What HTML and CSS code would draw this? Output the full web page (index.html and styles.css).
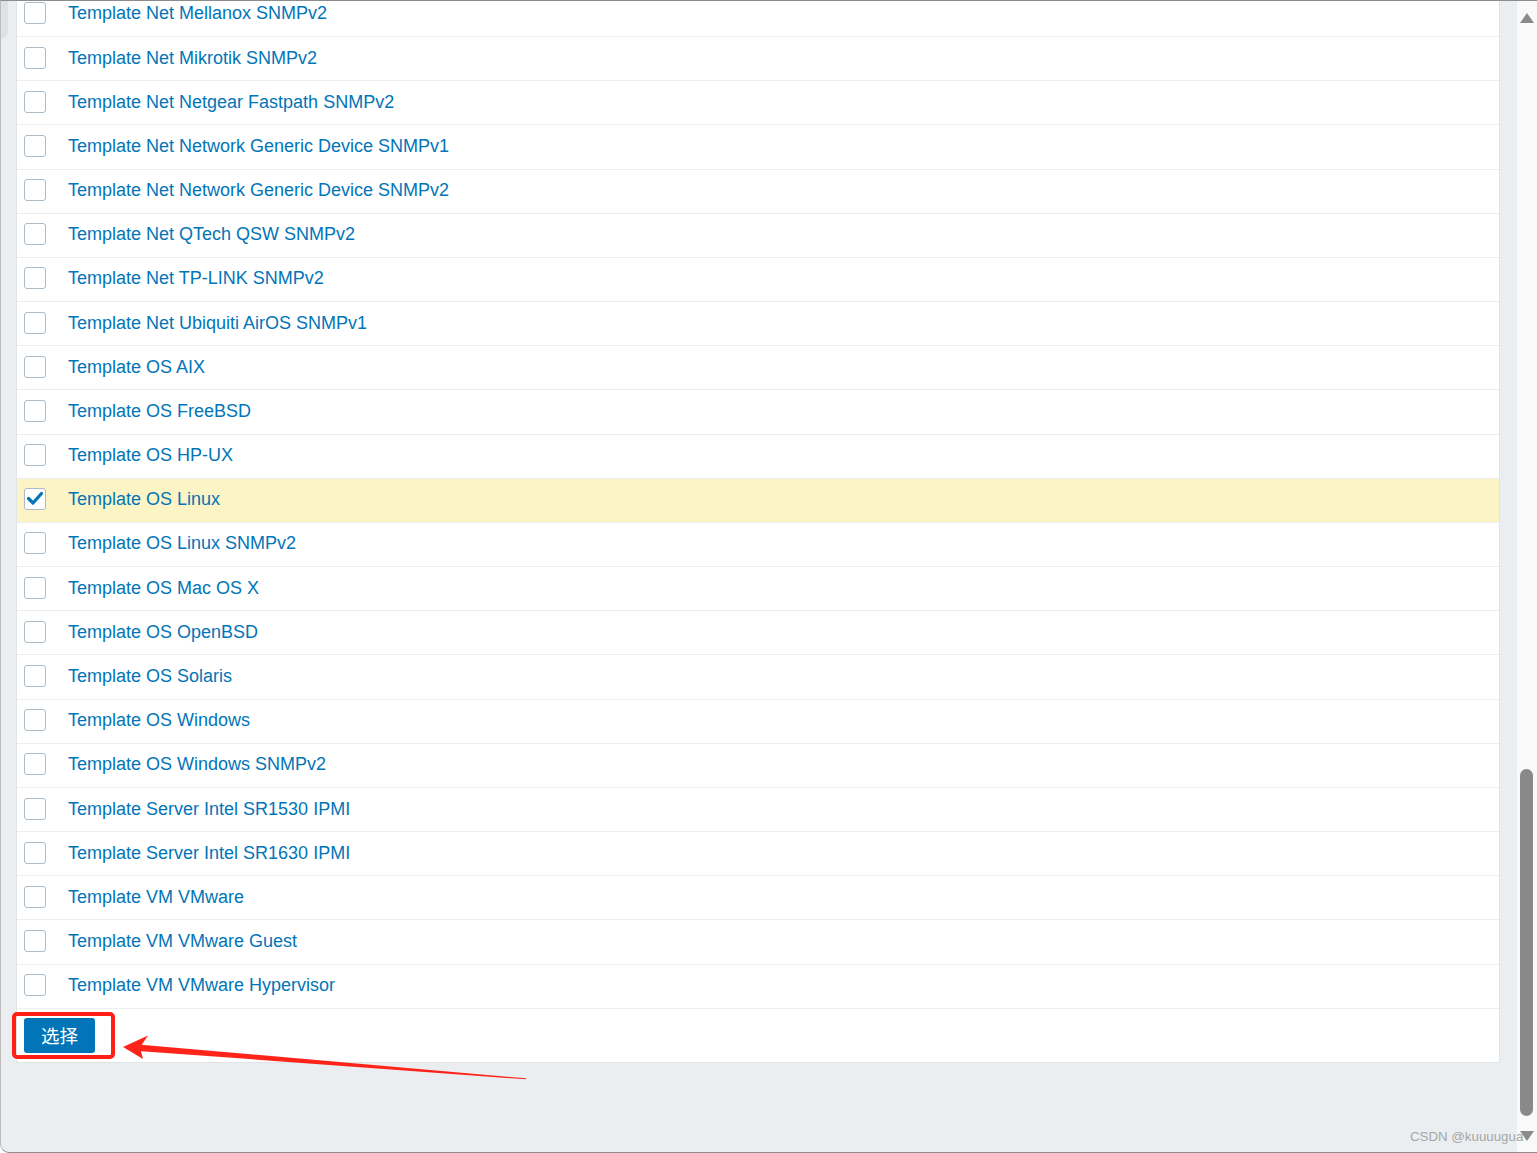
FILE: index.html
```html
<!DOCTYPE html>
<html lang="zh">
<head>
<meta charset="utf-8">
<title>Templates</title>
<link rel="stylesheet" href="styles.css">
</head>
<body>
<div class="frame">
  <div class="gutter"><div class="gutter-thumb"></div></div>
  <div class="content">
    <div class="panel">
      <ul class="list">
        <li class="row"><span class="cb"></span><a class="link">Template Net Mellanox SNMPv2</a></li>
        <li class="row"><span class="cb"></span><a class="link">Template Net Mikrotik SNMPv2</a></li>
        <li class="row"><span class="cb"></span><a class="link">Template Net Netgear Fastpath SNMPv2</a></li>
        <li class="row"><span class="cb"></span><a class="link">Template Net Network Generic Device SNMPv1</a></li>
        <li class="row"><span class="cb"></span><a class="link">Template Net Network Generic Device SNMPv2</a></li>
        <li class="row"><span class="cb"></span><a class="link">Template Net QTech QSW SNMPv2</a></li>
        <li class="row"><span class="cb"></span><a class="link">Template Net TP-LINK SNMPv2</a></li>
        <li class="row"><span class="cb"></span><a class="link">Template Net Ubiquiti AirOS SNMPv1</a></li>
        <li class="row"><span class="cb"></span><a class="link">Template OS AIX</a></li>
        <li class="row"><span class="cb"></span><a class="link">Template OS FreeBSD</a></li>
        <li class="row"><span class="cb"></span><a class="link">Template OS HP-UX</a></li>
        <li class="row selected"><span class="cb checked"><svg viewBox="0 0 22 22" width="22" height="22"><path d="M4.5 10.5 L9 15 L17.5 5.5" fill="none" stroke="#0275b8" stroke-width="3.2" stroke-linecap="round" stroke-linejoin="round"/></svg></span><a class="link">Template OS Linux</a></li>
        <li class="row"><span class="cb"></span><a class="link">Template OS Linux SNMPv2</a></li>
        <li class="row"><span class="cb"></span><a class="link">Template OS Mac OS X</a></li>
        <li class="row"><span class="cb"></span><a class="link">Template OS OpenBSD</a></li>
        <li class="row"><span class="cb"></span><a class="link">Template OS Solaris</a></li>
        <li class="row"><span class="cb"></span><a class="link">Template OS Windows</a></li>
        <li class="row"><span class="cb"></span><a class="link">Template OS Windows SNMPv2</a></li>
        <li class="row"><span class="cb"></span><a class="link">Template Server Intel SR1530 IPMI</a></li>
        <li class="row"><span class="cb"></span><a class="link">Template Server Intel SR1630 IPMI</a></li>
        <li class="row"><span class="cb"></span><a class="link">Template VM VMware</a></li>
        <li class="row"><span class="cb"></span><a class="link">Template VM VMware Guest</a></li>
        <li class="row"><span class="cb"></span><a class="link">Template VM VMware Hypervisor</a></li>
      </ul>
      <div class="footer">
        <button class="btn">选择</button>
      </div>
    </div>
  </div>
  <div class="scrollbar">
    <div class="arrow-up"></div>
    <div class="thumb"></div>
    <div class="arrow-down"></div>
  </div>

  <div class="annot-box"></div>
  <svg class="annot-arrow" width="420" height="52" viewBox="0 0 420 52">
    <polygon points="16,13.5 404,47.3 404,48.3 16,20" fill="#ff2419"/>
    <polygon points="1,16 26,4.5 18,16.5 21,28" fill="#ff2419"/>
  </svg>
  <div class="watermark">CSDN @kuuuugua</div>
</div>
</body>
</html>
```

FILE: styles.css
```css
html, body {
  margin: 0;
  padding: 0;
}
body {
  background: #ffffff;
  font-family: "Liberation Sans", Arial, "Noto Sans CJK SC", sans-serif;
  overflow: hidden;
}
.frame {
  position: relative;
  display: flex;
  height: 1153px;
  box-sizing: border-box;
  border-top: 1px solid #8c8c8c;
  border-bottom: 1px solid #8c8c8c;
  border-left: 1px solid #bcbcbc;
  border-radius: 0 0 0 9px;
  background: #ebeef0;
  overflow: hidden;
}
.gutter {
  width: 15px;
  flex: none;
}
.gutter-thumb {
  width: 8px;
  height: 37px;
  background: #dee2e6;
  border-radius: 0 0 6px 0;
  margin-left: -1px;
}
.content {
  width: 1484px;
  flex: none;
  margin-top: -8.18px;
}
.panel {
  background: #ffffff;
  border: 1px solid #dfe4e7;
  border-top: none;
}
.list {
  list-style: none;
  margin: 0;
  padding: 0;
}
.row {
  display: flex;
  align-items: center;
  height: 44.18px;
  box-sizing: border-box;
  border-bottom: 1px solid #ebeef0;
  padding-left: 7px;
}
.row.selected {
  background: #fdf4c5;
}
.cb {
  width: 22px;
  height: 22px;
  box-sizing: border-box;
  border: 1px solid #acbbc5;
  border-radius: 3px;
  background: #ffffff;
  flex: none;
  position: relative;
  margin-top: -2px;
}
.cb svg {
  position: absolute;
  left: -1px;
  top: -1px;
}
.link {
  margin-left: 22px;
  font-size: 18px;
  color: #0275b8;
  white-space: nowrap;
  margin-top: -1px;
}
.footer {
  height: 53px;
  padding: 9px 0 0 7px;
  box-sizing: border-box;
}
.btn {
  width: 71px;
  height: 35px;
  background: #0275b8;
  border: none;
  border-radius: 3px;
  color: #ffffff;
  font-family: "Noto Sans CJK SC", sans-serif;
  font-size: 18.5px;
  padding: 0;
  line-height: 35px;
}
.scrollbar {
  position: relative;
  width: 20px;
  flex: none;
  margin-left: 17px;
  background: #f9f9f9;
  margin-top: -1px;
  margin-bottom: -1px;
}
.arrow-up {
  position: absolute;
  left: 3px;
  top: 13px;
  width: 0;
  height: 0;
  border-left: 7px solid transparent;
  border-right: 7px solid transparent;
  border-bottom: 10px solid #8a8a8a;
}
.arrow-down {
  position: absolute;
  left: 3px;
  top: 1131px;
  width: 0;
  height: 0;
  border-left: 7px solid transparent;
  border-right: 7px solid transparent;
  border-top: 10px solid #8a8a8a;
}
.thumb {
  position: absolute;
  left: 3px;
  top: 769px;
  width: 13px;
  height: 347px;
  background: #898989;
  border-radius: 7px;
}
.annot-box {
  position: absolute;
  left: 11px;
  top: 1011px;
  width: 103px;
  height: 47px;
  box-sizing: border-box;
  border: 4px solid #ff1f14;
  border-radius: 5px;
}
.annot-arrow {
  position: absolute;
  left: 121px;
  top: 1030px;
}
.watermark {
  position: absolute;
  left: 1409px;
  top: 1128px;
  font-size: 13.3px;
  color: #a6a6a6;
  font-family: "Liberation Sans", Arial, sans-serif;
}
```
